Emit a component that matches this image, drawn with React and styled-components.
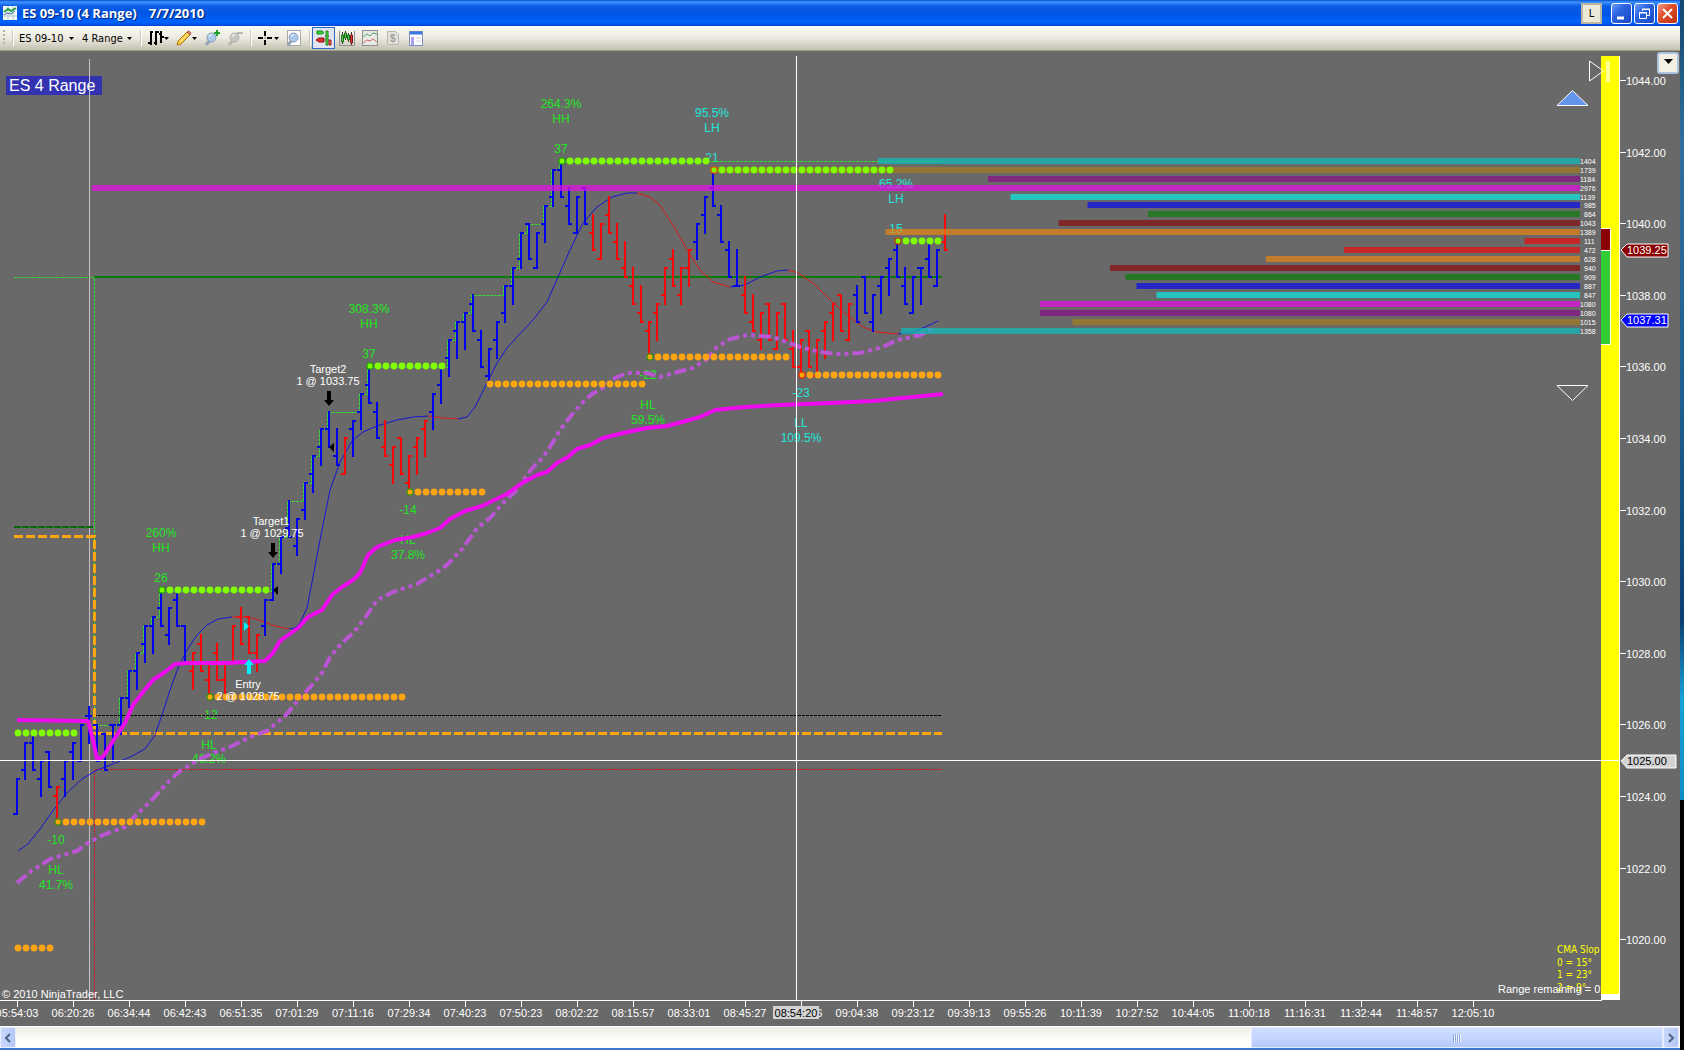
import React from "react";
import styled, { createGlobalStyle } from "styled-components";

const GlobalStyle = createGlobalStyle`
  * {
    box-sizing: border-box;
  }
  body {
    margin: 0;
    overflow: hidden;
    background: #000;
    font-family: "DejaVu Sans Condensed", "Liberation Sans", sans-serif;
  }
`

const Desktop = styled.div`
  display: flex;
  height: 100vh;
`

const Wallpaper = styled.div`
  flex: none;
  width: 4px;
  background: linear-gradient(#12466e 0, #2f6f9c 140px, #1d5f92 400px, #0b3f70 620px, #18a0d8 700px, #0f8cc8 800px, #000 800px);
`

const Window = styled.main`
  flex: 1;
  min-width: 0;
  display: flex;
  flex-direction: column;
  background: #696969;
  border-bottom: 2px solid #3a78d0;
`

const TitleBar = styled.header`
  flex: none;
  display: flex;
  align-items: center;
  height: 26px;
  padding: 0 2px 0 3px;
  background: linear-gradient(#0a4ad0 0, #3c96ff 2px, #0c5ce6 6px, #0055e5 14px, #0064ff 22px, #0046d2 26px);
`

const Title = styled.h1`
  flex: 1;
  margin: 0 0 0 5px;
  color: #fff;
  font-family: "Open Sans", sans-serif;
  font-size: 13px;
  font-weight: 700;
  line-height: 24px;
  text-shadow: 1px 1px 1px #00227a;
  time {
    margin-left: 12px;
  }
`

const LinkButton = styled.button`
  width: 21px;
  height: 21px;
  margin-right: 7px;
  padding: 0;
  border: 2px solid #b9b6a4;
  background: #ece9d8;
  font: 11px "DejaVu Sans Condensed", sans-serif;
`

const CaptionButton = styled.button`
  width: 21px;
  height: 21px;
  margin-left: 2px;
  padding: 0;
  border: 1px solid #fff;
  border-radius: 3px;
  background: ${props => props.$close
    ? "linear-gradient(135deg, #f0a088, #e0502c 40%, #c03010)"
    : "linear-gradient(135deg, #6a9cf8, #2a62e0 40%, #1a48c4)"};
  svg {
    display: block;
    margin: 0 auto;
  }
`

const Toolbar = styled.div`
  flex: none;
  display: flex;
  align-items: center;
  height: 25px;
  padding-left: 3px;
  background: linear-gradient(#fbfaf6, #eceae0 12px, #c4c2b0);
  border-bottom: 1px solid #9c9a88;
`

const Grip = styled.span`
  width: 2px;
  height: 16px;
  margin-right: 7px;
  background: repeating-linear-gradient(#b5b2a0 0 2px, transparent 2px 4px);
`

const Separator = styled.span`
  width: 2px;
  height: 16px;
  margin: 0 ${props => props.$gap || 4}px 0 ${props => props.$before || 0}px;
  background: #c8c5b4;
  border-right: 1px solid #fff;
`

const PickWrap = styled.span`
  display: flex;
  align-items: center;
  margin-right: 8px;
`

const Pick = styled.select`
  appearance: none;
  width: ${props => props.$width}px;
  padding: 0;
  border: 0;
  background: none;
  color: #000;
  font: 11px "DejaVu Sans Condensed", sans-serif;
`

const ToolButton = styled.button`
  display: flex;
  align-items: center;
  justify-content: center;
  width: ${props => props.$wide ? 28 : 23}px;
  height: 22px;
  padding: 0;
  border: ${props => props.$active ? "1px solid #316ac5" : "0"};
  background: ${props => props.$active ? "#dfe4ee" : "none"};
`

const ChartArea = styled.section`
  position: relative;
  flex: 1;
  min-height: 0;
`

const Chart = styled.svg`
  display: block;
  width: 100%;
  height: 100%;
  font-family: "Liberation Sans", Arial, sans-serif;
  font-size: 11px;
  fill: #fff;
  .swing {
    font-size: 12px;
    text-anchor: middle;
  }
  .middle {
    text-anchor: middle;
  }
  .volume {
    font-size: 7px;
  }
  .slope {
    font-family: "DejaVu Sans Condensed", sans-serif;
    font-size: 10px;
    fill: #ff0;
  }
  .name {
    font-size: 16px;
  }
`

const PanelMenu = styled.button`
  position: absolute;
  top: 1px;
  right: 1px;
  width: 22px;
  height: 22px;
  padding: 0;
  border: 2px solid #a9c4dc;
  border-radius: 3px;
  background: #f2f0e4;
  svg {
    display: block;
    margin: -3px auto 0;
  }
`

const ScrollBar = styled.div`
  flex: none;
  display: flex;
  height: 22px;
  padding-right: 1px;
  border-top: 1px solid #fff;
  background: linear-gradient(#efede6, #fefefb 14px);
`

const ScrollArrow = styled.button`
  width: 16px;
  padding: 0;
  border: 1px solid #e8eefc;
  border-radius: 2px;
  background: linear-gradient(90deg, #c8d6fb, #b4c8f6);
  svg {
    display: block;
    margin: 0 auto;
  }
`

const ScrollTrack = styled.div`
  flex: 1;
  display: flex;
  justify-content: flex-end;
`

const ScrollThumb = styled.div`
  display: flex;
  align-items: center;
  justify-content: center;
  width: 25%;
  border: 1px solid #e4ecff;
  border-radius: 2px;
  background: linear-gradient(#cfddff, #c2d3fd 60%, #b5c8f7);
  span {
    width: 8px;
    height: 8px;
    background: repeating-linear-gradient(90deg, #8ca6e0 0 1px, #eef4ff 1px 2px);
  }
`

const BLUE = "#0000ea"
const RED = "#f80808"
const LIME = "#7fff00"
const ORANGE = "#ffa510"
const SWING_GREEN = "#1fe61f"
const SWING_CYAN = "#1fe6dc"

// ticks above 1020.00: [high, open, close], every bar spans four ticks
const bars = [
  [18, 14, 18], [22, 19, 22], [23, 22, 19], [20, 18, 20], [21, 21, 17], [17, 16, 17], [20, 18, 20], [22, 21, 22],
  [24, 20, 24], [26, 25, 25], [24, 24, 20], [23, 23, 19], [24, 24, 24], [27, 24, 27], [30, 27, 30], [32, 30, 32],
  [35, 33, 35], [36, 35, 36], [39, 37, 35], [37, 34, 37], [39, 38, 35], [35, 35, 31], [32, 30, 32], [34, 33, 30],
  [31, 29, 31], [33, 32, 29], [31, 29, 31], [35, 31, 35], [37, 36, 33], [36, 36, 32], [34, 32, 34], [38, 35, 38],
  [42, 38, 42], [45, 42, 45], [49, 46, 45], [47, 44, 47], [51, 48, 51], [54, 52, 54], [57, 55, 57], [59, 57, 55],
  [57, 54, 53], [56, 52, 56], [58, 57, 58], [61, 59, 61], [64, 62, 60], [60, 59, 56], [58, 55, 54], [55, 53, 55],
  [56, 56, 52], [54, 51, 54], [56, 55, 56], [58, 57, 58], [61, 59, 61], [64, 62, 64], [67, 65, 67], [69, 68, 69],
  [70, 69, 70], [72, 71, 68], [68, 67, 64], [66, 63, 66], [69, 67, 69], [73, 70, 73], [75, 73, 75], [79, 76, 79],
  [80, 80, 76], [79, 75, 79], [82, 80, 82], [86, 83, 86], [87, 86, 83], [84, 82, 80], [83, 79, 83], [84, 84, 80],
  [81, 79, 77], [80, 76, 80], [83, 81, 79], [80, 78, 76], [78, 75, 74], [75, 73, 71], [73, 70, 69], [69, 68, 69],
  [71, 70, 71], [75, 72, 75], [77, 76, 73], [75, 72, 75], [77, 75, 77], [80, 78, 80], [83, 81, 83], [86, 84, 82],
  [82, 81, 78], [78, 77, 74], [77, 73, 73], [74, 72, 70], [72, 69, 68], [70, 67, 70], [71, 71, 67], [70, 66, 70],
  [71, 71, 67], [68, 66, 64], [67, 64, 67], [68, 68, 64], [67, 63, 67], [69, 68, 69], [71, 70, 71], [72, 72, 68],
  [71, 67, 71], [73, 72, 69], [74, 74, 70], [72, 69, 72], [74, 73, 74], [76, 75, 76], [78, 77, 74], [75, 73, 71],
  [74, 70, 74], [75, 75, 75], [78, 76, 74], [77, 73, 77], [81, 78, 77],
]

const redRanges = [[5, 5], [22, 30], [41, 41], [46, 51], [72, 84], [91, 104], [116, 116]]

const barX = i => 17 + i * 8
const tickY = t => Math.round(939.6 - t * 8.95)
const isRed = i => redRanges.some(([a, b]) => i >= a && i <= b)

const sessionHigh = () => {
  let high = 24
  let d = `M94.5 278V${tickY(high)}`
  for (let i = 11; i <= 68; i++) {
    if (bars[i][0] > high) {
      high = bars[i][0]
      d += `H${barX(i) - 2}V${tickY(high)}`
    }
  }
  return d + "H942"
}

const dotRows = [
  { from: 18, to: 74, y: 733, color: LIME },
  { from: 162, to: 266, y: 590, color: LIME, ring: "#008a00" },
  { from: 370, to: 442, y: 366, color: LIME, ring: "#008a00" },
  { from: 562, to: 706, y: 161, color: LIME, ring: "#008a00" },
  { from: 714, to: 890, y: 170, color: LIME, ring: "#ff2000" },
  { from: 898, to: 938, y: 241, color: LIME, ring: "#d00000" },
  { from: 18, to: 50, y: 948, color: ORANGE },
  { from: 58, to: 202, y: 822, color: ORANGE, ring: "#008a00" },
  { from: 210, to: 402, y: 697, color: ORANGE, ring: "#008a00" },
  { from: 410, to: 482, y: 492, color: ORANGE, ring: "#008a00" },
  { from: 490, to: 642, y: 384, color: ORANGE },
  { from: 650, to: 786, y: 357, color: ORANGE, ring: "#008a00" },
  { from: 802, to: 938, y: 375, color: ORANGE, ring: "#e00000" },
]

const volumes = [
  [1404, "#0cbebe"], [1739, "#a37e1a"], [1184, "#8a0c8a"], [2976, "#e80ce8"], [1139, "#0ce9e2"],
  [985, "#0c0ce9"], [864, "#0c7e0c"], [1043, "#8a0c0c"], [1389, "#e98513"], [111, "#e90c0c"],
  [472, "#e90c0c"], [628, "#e98513"], [940, "#8a0c0c"], [909, "#0c7e0c"], [887, "#0c0ce9"],
  [847, "#0ce9e2"], [1080, "#e80ce8"], [1080, "#8a0c8a"], [1015, "#a37e1a"], [1358, "#0cbebe"],
]

const averages = [
  [BLUE, "18,851 28,844 40,829 52,812 66,794 82,779 97,770 113,764 130,757 145,749 155,735 163,712 170,690 178,668 187,650 197,635 207,625 218,619 232,617"],
  [RED, "232,617 248,617 262,621 275,626 289,629"],
  [BLUE, "289,629 295,628 300,623 307,608 313,577 320,540 330,490 340,462 352,441 363,432 377,426 397,420 413,417 428,416"],
  [RED, "428,416 443,418 458,419"],
  [BLUE, "458,419 467,417 475,407 485,387 497,363 507,348 517,337 533,320 547,302 558,277 570,250 583,223 597,207 612,197 627,193 637,193"],
  [RED, "637,193 650,197 660,205 673,225 687,250 700,270 713,282 730,287"],
  [BLUE, "730,287 745,285 760,277 777,271 788,270"],
  [RED, "788,270 798,273 813,283 830,300 847,315 863,327 877,332 898,334"],
  [BLUE, "898,334 913,332 925,327 938,321"],
]

const vwap = "17,720 88,721 93,740 97,759 103,757 115,738 125,723 133,705 143,692 153,680 165,672 175,664 187,663 227,663 265,661 273,653 280,641 298,628 308,617 322,610 332,595 342,587 353,580 360,573 368,555 377,547 395,540 413,537 427,533 440,528 450,519 465,511 482,506 507,494 522,483 537,475 547,472 557,463 568,457 577,449 590,445 603,438 623,433 647,428 667,426 682,422 700,417 715,410 745,407 780,405 830,403 873,401 943,394"

const violet = "17,883 30,872 50,859 77,851 88,843 103,835 125,827 137,814 150,802 167,783 180,771 200,759 213,753 230,747 250,737 267,731 285,716 300,698 312,685 322,673 330,657 342,643 355,631 367,615 377,600 393,592 417,584 437,572 447,565 463,548 477,528 490,518 503,503 515,492 530,471 543,457 550,447 560,430 570,417 580,405 592,394 603,388 615,378 627,373 647,373 660,377 677,372 693,368 707,359 717,347 730,339 747,335 773,337 800,347 820,352 837,354 860,353 883,347 897,340 920,335 935,328"

const swings = [
  [161, SWING_GREEN, [["260%", 537], ["HH", 552], ["26", 582]]],
  [369, SWING_GREEN, [["308.3%", 313], ["HH", 328], ["37", 358]]],
  [561, SWING_GREEN, [["264.3%", 108], ["HH", 123], ["37", 153]]],
  [712, SWING_CYAN, [["95.5%", 117], ["LH", 132], ["21", 162]]],
  [896, SWING_CYAN, [["65.2%", 188], ["LH", 203], ["15", 233]]],
  [56, SWING_GREEN, [["-10", 844], ["HL", 874], ["41.7%", 889]]],
  [209, SWING_GREEN, [["-12", 719], ["HL", 749], ["46.2%", 763]]],
  [408, SWING_GREEN, [["-14", 514], ["HL", 544], ["37.8%", 559]]],
  [648, SWING_GREEN, [["-22", 379], ["HL", 409], ["59.5%", 424]]],
  [801, SWING_CYAN, [["-23", 397], ["LL", 427], ["109.5%", 442]]],
]

const times = [
  "05:54:03", "06:20:26", "06:34:44", "06:42:43", "06:51:35", "07:01:29", "07:11:16", "07:29:34", "07:40:23",
  "07:50:23", "08:02:22", "08:15:57", "08:33:01", "08:45:27", "08:54:46", "09:04:38", "09:23:12", "09:39:13",
  "09:55:26", "10:11:39", "10:27:52", "10:44:05", "11:00:18", "11:16:31", "11:32:44", "11:48:57", "12:05:10",
]

const prices = [1044, 1042, 1040, 1038, 1036, 1034, 1032, 1030, 1028, 1026, 1024, 1022, 1020]

const PriceBars = () => (
  <g shapeRendering="crispEdges" strokeWidth="2" fill="none">
    {bars.map(([high, open, close], i) => {
      const x = barX(i)
      return (
        <path
          key={i}
          stroke={isRed(i) ? RED : BLUE}
          d={`M${x} ${tickY(high) - 1}V${tickY(high - 4) + 1}M${x - 4} ${tickY(open)}H${x}M${x} ${tickY(close)}H${x + 3}`}
        />
      )
    })}
  </g>
)

const DotRow = ({ from, to, y, color, ring }) => {
  const dots = []
  for (let x = from; x <= to; x += 8) dots.push(x)
  return (
    <g>
      {dots.map(x => <circle key={x} cx={x} cy={y} r="3.4" fill={color} />)}
      {ring && <rect x={from - 3} y={y - 3} width="6" height="6" rx="2" fill="none" stroke={ring} strokeWidth="1" />}
    </g>
  )
}

const PriceTag = ({ y, fill, color, right, children }) => (
  <g>
    <path d={`M1621 ${y}L1627 ${y - 6}H${right}V${y + 7}H1627Z`} fill={fill} stroke="#fff" />
    <text x="1627" y={y + 4} fill={color}>{children}</text>
  </g>
)

const Indicators = () => (
  <g>
    <g fill="none" shapeRendering="crispEdges">
      <path d="M14 527H94" stroke="#0a6a0a" strokeWidth="2" strokeDasharray="7 1" />
      <path d="M14 277.5H94" stroke="#2fe02f" strokeDasharray="2 1" />
      <path d={sessionHigh()} stroke="#2fe02f" strokeDasharray="3 1" />
      <path d="M94 277H942" stroke="#0a7a0a" strokeWidth="2" />
      <path d="M94 715.5H942" stroke="#000" strokeDasharray="3 1" />
      <path d="M94.5 1000V769.5H942" stroke="#d01818" strokeDasharray="2 1" />
      <path d="M14 536.5H94.5V733.5" stroke={ORANGE} strokeWidth="3" strokeDasharray="9 3" />
      <path d="M94 733.5H942" stroke={ORANGE} strokeWidth="3" strokeDasharray="9 3" />
    </g>
    <g fill="none" strokeLinejoin="round">
      {averages.map(([color, points]) => (
        <polyline key={points} points={points} stroke={color} strokeWidth="1" opacity="0.8" />
      ))}
    </g>
  </g>
)

const VolumeProfile = () => (
  <g>
    {volumes.map(([count, color], i) => {
      const y = Math.floor(161.2 + i * 8.95)
      return (
        <g key={i}>
          <rect x={1580 - count / 2} y={y - 3} width={count / 2} height="6" fill={color} opacity="0.7" />
          <text className="volume" x={count > 999 ? 1580 : 1584} y={y + 3}>{count}</text>
        </g>
      )
    })}
  </g>
)

const Trades = () => (
  <g>
    <g className="middle">
      <text x="328" y="373">Target2</text>
      <text x="328" y="385">1 @ 1033.75</text>
      <text x="271" y="525">Target1</text>
      <text x="272" y="537">1 @ 1029.75</text>
      <text x="248" y="688">Entry</text>
      <text x="248" y="700">2 @ 1028.75</text>
    </g>
    <g fill="#000">
      <path d="M327 391h4v9h3l-5 6-5-6h3z" />
      <path d="M271 543h4v9h3l-5 6-5-6h3z" />
      <path d="M278 586v9l-5-5zM334 443v9l-5-5z" />
    </g>
    <path d="M247 674h4v-9h3l-5-6-5 6h3zM244 622v9l5-5z" fill="#00f0ff" />
  </g>
)

const Axes = () => (
  <g>
    <rect x="1601" y="56" width="18" height="938" fill="#ff0" />
    <rect x="1601" y="994" width="19" height="6" />
    <g shapeRendering="crispEdges" stroke="#fff" fill="none">
      <path d="M1619.5 56V1000M0 1000.5H1602M796.5 56V1000M0 760.5H1620" />
      {prices.map((p, i) => <path key={p} d={`M1620 ${Math.round(81 + i * 71.6) - 0.5}h6`} />)}
      {times.map((t, i) => <path key={t} d={`M${17.5 + i * 56} 1001v6`} />)}
    </g>
    {prices.map((p, i) => <text key={p} x="1626" y={Math.round(85 + i * 71.6)}>{p}.00</text>)}
    <g className="middle">
      {times.map((t, i) => <text key={t} x={17 + i * 56} y="1017">{t}</text>)}
    </g>
    <rect x="773" y="1006" width="46" height="13" fill="#d3d3d3" />
    <text className="middle" x="796" y="1017" fill="#000">08:54:20</text>
    <rect x="1601" y="229" width="9" height="21" fill="#8b0000" />
    <rect x="1601" y="251" width="9" height="93" fill="#32cd32" />
    <path d="M1601 228.5h9.500v116h-9.500M1601 250.500h9" fill="none" stroke="#fff" />
    <PriceTag y={250} fill="#8b0000" right={1668}>1039.25</PriceTag>
    <PriceTag y={320} fill="#00f" right={1668}>1037.31</PriceTag>
    <PriceTag y={761} fill="#d3d3d3" color="#000" right={1676}>1025.00</PriceTag>
    <path d="M1589.500 61v20l14-10z" fill="none" stroke="#fff" />
    <rect x="1606" y="61" width="4" height="21" fill="#ffff9a" />
    <path d="M1557 105.500l15.500-15 15.500 15z" fill="#6495ed" stroke="#fff" />
    <path d="M1557 385.500h31l-15.500 15z" fill="none" stroke="#fff" />
  </g>
)

const PriceChart = () => (
  <Chart viewBox="0 51 1680 975" preserveAspectRatio="xMinYMin meet" role="img" aria-label="ES 4 Range price chart">
    <rect x="6" y="76" width="96" height="19" fill="#3333b2" />
    <text className="name" x="9" y="91">ES 4 Range</text>
    <path d="M89.500 59V1000" stroke="#c6bfc6" />
    {swings.map(([x, color, lines]) => lines.map(([text, y]) => (
      <text className="swing" key={text + y} x={x} y={y} fill={color}>{text}</text>
    )))}
    <Indicators />
    <PriceBars />
    <polyline points={violet} fill="none" stroke="#ba55d3" strokeWidth="4" strokeDasharray="12 4 4 4 4 4" />
    <polyline points={vwap} fill="none" stroke="#f00af0" strokeWidth="4" strokeLinejoin="round" />
    <VolumeProfile />
    {dotRows.map(row => <DotRow key={`${row.from}-${row.y}`} {...row} />)}
    <Trades />
    <text x="2" y="998">© 2010 NinjaTrader, LLC</text>
    <g className="slope">
      <text x="1557" y="953">CMA Slop</text>
      <text x="1557" y="966">0 = 15°</text>
      <text x="1557" y="978">1 = 23°</text>
      <text x="1557" y="991">2 = 9°</text>
    </g>
    <text x="1498" y="993">Range remaining = 0</text>
    <Axes />
  </Chart>
)

const Caret = () => (
  <svg width="5" height="3" viewBox="0 0 5 3"><path d="M0 0h5L2.500 3z" fill="#000" /></svg>
)

const Lens = ({ gray }) => (
  <g>
    <path d="M2 15l4-5" stroke={gray ? "#b8b6ae" : "#9aa4b0"} strokeWidth="3" />
    <circle cx="7.500" cy="7.500" r="4.500" fill={gray ? "#c6c6c4" : "#a9c8ea"} stroke={gray ? "#b4b4b0" : "#8a9cb4"} />
    <path d="M5 7a3 3 0 0 1 3-2.500" stroke="#fff" fill="none" />
  </g>
)

const Icon = ({ children }) => (
  <svg width="16" height="16" viewBox="0 0 16 16" fill="none">{children}</svg>
)

const Tools = () => (
  <Toolbar role="toolbar" aria-label="Chart">
    <Grip />
    <Separator $gap={5} />
    <PickWrap>
      <Pick aria-label="Instrument" $width={50}><option>ES 09-10</option></Pick>
      <Caret />
    </PickWrap>
    <PickWrap>
      <Pick aria-label="Period" $width={45}><option>4 Range</option></Pick>
      <Caret />
    </PickWrap>
    <Separator $gap={2} />
    <ToolButton $wide aria-label="Chart style">
      <Icon>
        <g shapeRendering="crispEdges" stroke="#000" strokeWidth="2">
          <path d="M3 1v14M0 13h3M3 2h2M8 1v14M6 13h2M8 2h3M13 1v12M13 7h3M11 4h2" />
        </g>
      </Icon>
      <Caret />
    </ToolButton>
    <ToolButton $wide aria-label="Drawing tools">
      <Icon>
        <path d="M1 15l1-4L11 2l3 3-9 9z" fill="#f8c840" stroke="#b07818" />
        <path d="M11 2l2-1 2 2-1 2z" fill="#e88878" stroke="#b05848" />
        <path d="M4 12l8-8" stroke="#fff0a0" />
      </Icon>
      <Caret />
    </ToolButton>
    <ToolButton aria-label="Zoom in">
      <Icon><Lens /><path d="M13 0v6M10 3h6" stroke="#18a028" strokeWidth="2" /></Icon>
    </ToolButton>
    <ToolButton aria-label="Zoom out" disabled>
      <Icon><Lens gray /><path d="M10 3h6" stroke="#b8b6ae" strokeWidth="2" /></Icon>
    </ToolButton>
    <Separator $before={4} $gap={2} />
    <ToolButton $wide aria-label="Crosshair">
      <Icon><path d="M7 1v5M7 10v5M0 8h5M9 8h5" stroke="#000" strokeWidth="2" /><path d="M6.500 7.500h1v1h-1z" fill="#000" /></Icon>
      <Caret />
    </ToolButton>
    <ToolButton aria-label="Data box">
      <Icon>
        <rect x="1.500" y=".5" width="13" height="15" fill="#fff" stroke="#a8a8a8" />
        <Lens />
      </Icon>
    </ToolButton>
    <Separator $before={4} $gap={1} />
    <ToolButton $active aria-label="Chart trader" aria-pressed="true">
      <Icon>
        <path d="M1 1h5l2 1.500-2 1.500H1z" fill="#38d038" stroke="#189018" />
        <path d="M8 8H3l-3 2 3 2h5z" fill="#e03030" stroke="#901010" />
        <path d="M9 6h4M9 10h4" stroke="#404040" />
        <path d="M10 1h2v14h-2z" fill="#60d840" stroke="#208820" />
        <path d="M13 10h2v5h-2z" fill="#f06060" stroke="#a02020" />
      </Icon>
    </ToolButton>
    <ToolButton aria-label="Data series">
      <Icon>
        <path d="M.5 1v14.500h15M15.500 15V1" stroke="#909090" />
        <path d="M3.500 2v12M6.500 1v9M9.500 3v9M12.500 2v13" stroke="#303030" />
        <path d="M2.500 5h2v7h-2zM5.500 3h2v5h-2z" fill="#50c840" stroke="#207020" />
        <path d="M8.500 5h2v5h-2z" fill="#50c840" stroke="#207020" />
        <path d="M11.500 5h2v8h-2z" fill="#e03838" stroke="#801818" />
      </Icon>
    </ToolButton>
    <ToolButton aria-label="Indicators">
      <Icon>
        <rect x=".5" y=".5" width="15" height="15" fill="#e8e8e4" stroke="#909090" />
        <path d="M1 7l4-3 3 2 3-3 4 1" stroke="#50a868" />
        <path d="M1 13l4-3 3 1 3-2 4 3" stroke="#d06868" />
      </Icon>
    </ToolButton>
    <ToolButton aria-label="Strategies" disabled>
      <Icon>
        <path d="M2.500 1.500h8l3 3v10h-11z" fill="#e4e2da" stroke="#b8b6ae" />
        <text x="5" y="12" fontSize="10" fontWeight="700" fill="#a0a09a">$</text>
      </Icon>
    </ToolButton>
    <ToolButton aria-label="Properties">
      <Icon>
        <rect x="1.500" y="1.500" width="13" height="14" fill="#fff" stroke="#7890c0" />
        <path d="M2 3h12" stroke="#3878e0" strokeWidth="3" />
        <rect x="3" y="7" width="3" height="8" fill="#a8a0f0" />
        <path d="M8 8h5M8 11h5" stroke="#d0d0e0" />
      </Icon>
    </ToolButton>
  </Toolbar>
)

export default function App() {
  return (
    <Desktop>
      <GlobalStyle />
      <Window>
        <TitleBar>
          <svg width="14" height="14" viewBox="0 0 14 14" aria-hidden="true">
            <rect width="14" height="14" fill="#f4f8f4" />
            <path d="M0 10h14M5 0v14M10 0v14" stroke="#b8c8d0" />
            <path d="M1 6l4-3 3 2 5-3" stroke="#20a040" strokeWidth="2" fill="none" />
            <path d="M1 9l3-2 4 1 4-3" stroke="#3860a0" fill="none" />
          </svg>
          <Title>ES 09-10 (4 Range)<time>7/7/2010</time></Title>
          <LinkButton>L</LinkButton>
          <CaptionButton aria-label="Minimize">
            <svg width="15" height="15"><path d="M3 12h7" stroke="#fff" strokeWidth="3" /></svg>
          </CaptionButton>
          <CaptionButton aria-label="Restore">
            <svg width="15" height="15" fill="none" stroke="#fff">
              <path d="M5.500 5V3.500h7v6H10M5 3h8" /><path d="M2.500 6.500h7v6h-7zM2 7h8" />
            </svg>
          </CaptionButton>
          <CaptionButton $close aria-label="Close">
            <svg width="15" height="15"><path d="M3 3l9 9M12 3l-9 9" stroke="#fff" strokeWidth="2" /></svg>
          </CaptionButton>
        </TitleBar>
        <Tools />
        <ChartArea>
          <PriceChart />
          <PanelMenu aria-label="Panel menu">
            <svg width="9" height="5"><path d="M0 0h9L4.500 5z" /></svg>
          </PanelMenu>
        </ChartArea>
        <ScrollBar>
          <ScrollArrow aria-label="Scroll left">
            <svg width="8" height="10"><path d="M6 1L2 5l4 4" fill="none" stroke="#4d6185" strokeWidth="2" /></svg>
          </ScrollArrow>
          <ScrollTrack>
            <ScrollThumb><span /></ScrollThumb>
          </ScrollTrack>
          <ScrollArrow aria-label="Scroll right">
            <svg width="8" height="10"><path d="M2 1l4 4-4 4" fill="none" stroke="#4d6185" strokeWidth="2" /></svg>
          </ScrollArrow>
        </ScrollBar>
      </Window>
      <Wallpaper />
    </Desktop>
  )
}
